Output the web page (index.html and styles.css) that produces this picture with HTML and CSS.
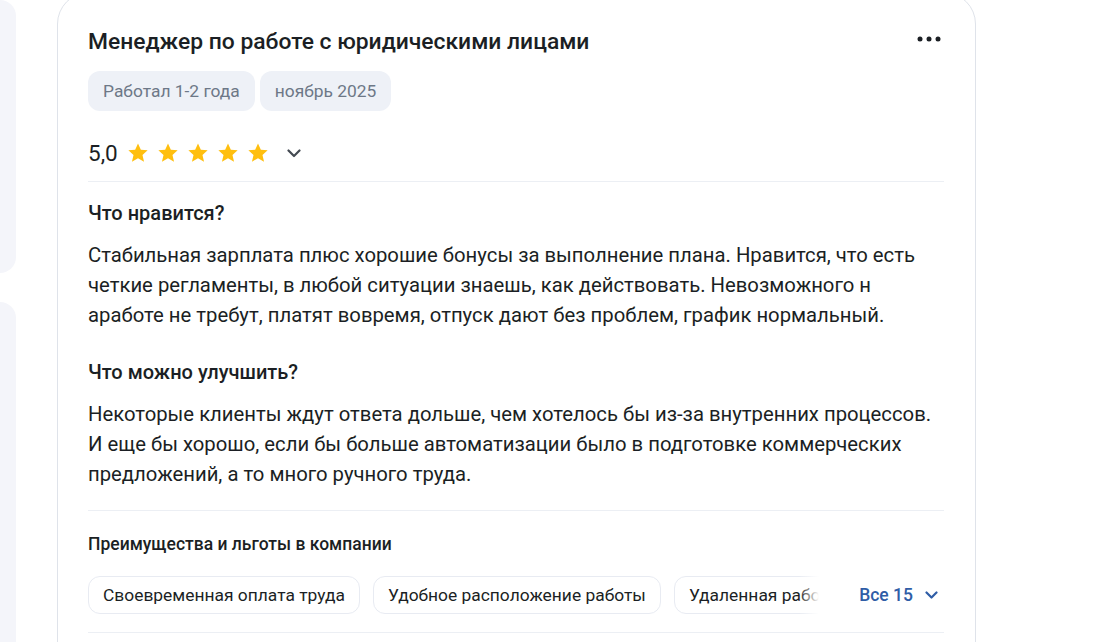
FILE: index.html
```html
<!DOCTYPE html>
<html lang="ru">
<head>
<meta charset="utf-8">
<link rel="stylesheet" href="styles.css">
</head>
<body>
<div class="page">
  <div class="side">
    <div class="side-card side-card-top"></div>
    <div class="side-card side-card-bottom"></div>
  </div>
  <div class="review">
    <div class="review-head">
      <h2 class="title">Менеджер по работе с юридическими лицами</h2>
      <button class="more" aria-label="Ещё">
        <svg width="24" height="6" viewBox="0 0 24 6"><circle cx="3" cy="3" r="2.5" fill="#1b1f24"/><circle cx="12" cy="3" r="2.5" fill="#1b1f24"/><circle cx="21" cy="3" r="2.5" fill="#1b1f24"/></svg>
      </button>
    </div>
    <div class="tags">
      <span class="tag">Работал 1-2 года</span>
      <span class="tag">ноябрь 2025</span>
    </div>
    <div class="rating">
      <span class="score">5,0</span>
      <span class="stars">
        <svg class="star" viewBox="0 0 24 24"><path d="M12 1.5l3.1 6.9 7.4.7-5.6 5 1.7 7.4L12 17.6l-6.6 3.9 1.7-7.4-5.6-5 7.4-.7z"/></svg>
        <svg class="star" viewBox="0 0 24 24"><path d="M12 1.5l3.1 6.9 7.4.7-5.6 5 1.7 7.4L12 17.6l-6.6 3.9 1.7-7.4-5.6-5 7.4-.7z"/></svg>
        <svg class="star" viewBox="0 0 24 24"><path d="M12 1.5l3.1 6.9 7.4.7-5.6 5 1.7 7.4L12 17.6l-6.6 3.9 1.7-7.4-5.6-5 7.4-.7z"/></svg>
        <svg class="star" viewBox="0 0 24 24"><path d="M12 1.5l3.1 6.9 7.4.7-5.6 5 1.7 7.4L12 17.6l-6.6 3.9 1.7-7.4-5.6-5 7.4-.7z"/></svg>
        <svg class="star" viewBox="0 0 24 24"><path d="M12 1.5l3.1 6.9 7.4.7-5.6 5 1.7 7.4L12 17.6l-6.6 3.9 1.7-7.4-5.6-5 7.4-.7z"/></svg>
      </span>
      <svg class="chev" width="14" height="9" viewBox="0 0 14 9"><path d="M1.5 1.5L7 7l5.5-5.5" fill="none" stroke="#444a52" stroke-width="2.2" stroke-linecap="round" stroke-linejoin="round"/></svg>
    </div>
    <div class="divider"></div>
    <div class="section">
      <h3 class="section-title">Что нравится?</h3>
      <p class="section-text">Стабильная зарплата плюс хорошие бонусы за выполнение плана. Нравится, что есть четкие регламенты, в любой ситуации знаешь, как действовать. Невозможного н аработе не требут, платят вовремя, отпуск дают без проблем, график нормальный.</p>
    </div>
    <div class="section">
      <h3 class="section-title">Что можно улучшить?</h3>
      <p class="section-text">Некоторые клиенты ждут ответа дольше, чем хотелось бы из-за внутренних процессов. И еще бы хорошо, если бы больше автоматизации было в подготовке коммерческих предложений, а то много ручного труда.</p>
    </div>
    <div class="divider divider-benefits"></div>
    <h4 class="benefits-title">Преимущества и льготы в компании</h4>
    <div class="benefits">
      <div class="chips">
        <span class="chip">Своевременная оплата труда</span>
        <span class="chip">Удобное расположение работы</span>
        <span class="chip">Удаленная работа</span>
      </div>
      <button class="all">Все 15
        <svg width="13" height="8" viewBox="0 0 13 8"><path d="M1.5 1.5L6.5 6.5l5-5" fill="none" stroke="#2f5da6" stroke-width="2.2" stroke-linecap="round" stroke-linejoin="round"/></svg>
      </button>
    </div>
    <div class="divider divider-last"></div>
  </div>
</div>
</body>
</html>
```
FILE: styles.css
```css
* { box-sizing: border-box; }
html, body { margin: 0; padding: 0; background: #fff; }
body {
  font-family: Roboto, "Noto Sans", "Liberation Sans", sans-serif;
  color: #1b1f24;
  height: 642px;
  overflow: hidden;
}
.page {
  display: flex;
  align-items: flex-start;
}
.side {
  width: 16px;
  flex: none;
  display: flex;
  flex-direction: column;
  gap: 29px;
  margin-right: 41px;
}
.side-card {
  background: #f4f5fa;
  border-radius: 0 18px 18px 0;
}
.side-card-top { height: 273px; }
.side-card-bottom { height: 400px; }
.review {
  width: 919px;
  flex: none;
  margin-top: -8px;
  border: 1px solid #dfe3ea;
  border-radius: 32px 32px 0 0;
  padding: 35px 31px 0 30px;
  min-height: 700px;
}
.review-head {
  display: flex;
  justify-content: space-between;
  align-items: flex-start;
}
.title {
  margin: 0;
  font-size: 22.85px;
  line-height: 28px;
  font-weight: 500;
  color: #1b1f24;
}
.more {
  border: 0;
  background: none;
  padding: 0;
  margin: 8px 3px 0 0;
  display: flex;
}
.tags {
  display: flex;
  gap: 5px;
  margin-top: 15px;
}
.tag {
  background: #eef1f7;
  border-radius: 12px;
  height: 40px;
  padding: 0 15px;
  display: flex;
  align-items: center;
  font-size: 17.4px;
  color: #6d7887;
}
.rating {
  display: flex;
  align-items: center;
  margin-top: 25px;
  height: 34px;
}
.score {
  font-size: 22.5px;
  color: #1b1f24;
  margin-right: 9px;
}
.stars {
  display: flex;
  gap: 8px;
}
.star {
  width: 22px;
  height: 22px;
  fill: #ffbf0f;
}
.chev { margin-left: 18px; margin-top: 1px; }
.divider {
  height: 1px;
  background: #eceff4;
  margin-top: 11px;
}
.section { margin-top: 19px; }
.section + .section { margin-top: 30px; }
.section-title {
  margin: 0;
  font-size: 20px;
  line-height: 24px;
  font-weight: 500;
}
.section-text {
  margin: 15px 0 0;
  font-size: 20.3px;
  line-height: 30px;
  color: #1b1f24;
}
.divider-benefits { margin-top: 21px; }
.benefits-title {
  margin: 22px 0 0;
  font-size: 17.5px;
  line-height: 22px;
  font-weight: 500;
}
.benefits {
  display: flex;
  align-items: center;
  margin-top: 21px;
}
.chips {
  flex: 1;
  display: flex;
  gap: 13px;
  overflow: hidden;
  position: relative;
  margin-right: 24px;
}
.chips::after {
  content: "";
  position: absolute;
  right: 0;
  top: 0;
  bottom: 0;
  width: 36px;
  background: linear-gradient(to right, rgba(255,255,255,0), #fff 55%);
}
.chip {
  flex: none;
  height: 38px;
  padding: 0 14px;
  display: flex;
  align-items: center;
  border: 1px solid #e8ebf2;
  border-radius: 12px;
  font-size: 17.4px;
  white-space: nowrap;
}
.all {
  border: 0;
  background: none;
  padding: 0;
  display: flex;
  align-items: center;
  gap: 12px;
  font-family: inherit;
  font-size: 17.5px;
  font-weight: 500;
  color: #2f5da6;
  margin-right: 6px;
}
.divider-last { margin-top: 18px; }
```
